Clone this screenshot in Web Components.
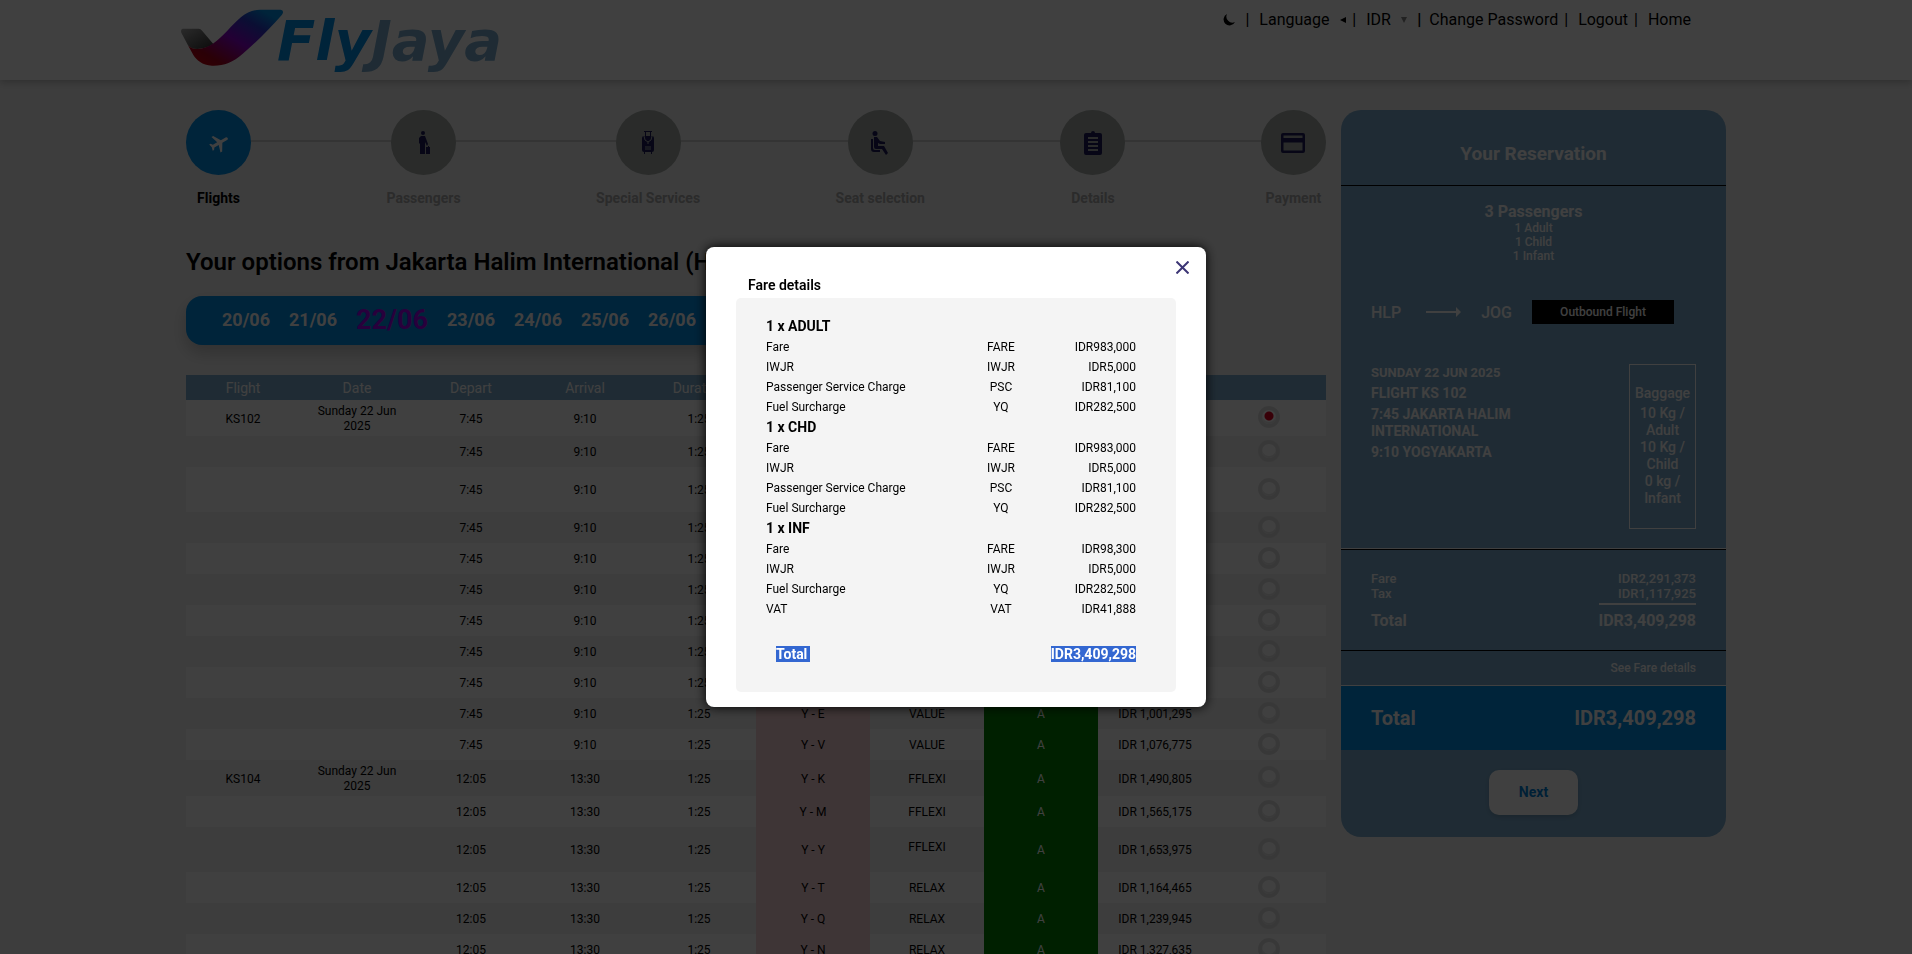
<!DOCTYPE html>
<html lang="en">
<head>
<meta charset="utf-8">
<title>FlyJaya</title>
<style>
    :root {
        --blue: #008ee6;
        --light-blue: #7cacce;
        --page: #f3f3f3;
    }

    body {
        margin: 0;
        height: 100vh;
        overflow: hidden;
        background: var(--page);
        color: #000;
        font: 14px/17px Roboto, "Liberation Sans", sans-serif;
    }
</style>
</head>
<body>
<site-header></site-header>
<booking-page>
    <booking-steps>
        <booking-step icon="plane" active>Flights</booking-step>
        <booking-step icon="person">Passengers</booking-step>
        <booking-step icon="luggage">Special Services</booking-step>
        <booking-step icon="seat">Seat selection</booking-step>
        <booking-step icon="clipboard">Details</booking-step>
        <booking-step icon="card">Payment</booking-step>
    </booking-steps>
    <flight-options>Your options from Jakarta Halim International (HLP) to Yogyakarta (JOG)</flight-options>
    <reservation-panel slot="aside"></reservation-panel>
</booking-page>
<fare-dialog>
    <span slot="title">Fare details</span>
    <fare-breakdown></fare-breakdown>
</fare-dialog>

<script>
/** Shared base: puts the element's style and markup in an open shadow root. */
class BaseElement extends HTMLElement {
    constructor() {
        super();
        const shadow = this.attachShadow({ mode: 'open' });
        const template = document.createElement('template');
        template.innerHTML = `<style>${this.css}</style>${this.html}`;
        shadow.appendChild(template.content.cloneNode(true));
    }

    get css() { return ''; }
    get html() { return '<slot></slot>'; }
}

class SiteHeader extends BaseElement {
    get css() {
        return /*css*/`
            :host {
                display: block;
                background: #fff;
                box-shadow: 0 2px 8px rgba(0, 0, 0, .25);
            }
            .inner {
                display: flex;
                justify-content: space-between;
                align-items: flex-start;
                box-sizing: border-box;
                height: 80px;
                max-width: 1550px;
                margin: 0 auto;
                padding: 0 40px 0 0;
            }
            .logo {
                display: flex;
                text-decoration: none;
            }
            .logo svg { display: block; }
            nav {
                display: flex;
                align-items: center;
                padding-top: 10px;
                font-size: 16px;
                line-height: 20px;
            }
            nav a, nav label { color: inherit; text-decoration: none; }
            nav label { display: flex; align-items: center; gap: 10px; }
            nav i { font-style: normal; margin: 0 10px 0 6px; }
            select, button {
                appearance: none;
                border: 0;
                margin: 0;
                padding: 0;
                background: none;
                color: inherit;
                font: inherit;
            }
            button { display: flex; margin-right: 3px; }
            b { font-weight: 900; margin: 0 8px 0 10px; }
            nav svg { display: block; }
        `;
    }

    get html() {
        return /*html*/`
            <div class="inner">
                <a class="logo" href="#" aria-label="FlyJaya">
                    <svg width="350" height="78" viewBox="0 0 350 78">
                        <defs>
                            <linearGradient id="ribbon" x1="0" y1="1" x2="1" y2="0">
                                <stop offset=".1" stop-color="#c00010"/>
                                <stop offset=".2" stop-color="#a8001c"/>
                                <stop offset=".48" stop-color="#8a00d0"/>
                                <stop offset=".72" stop-color="#2a3ccc"/>
                                <stop offset=".88" stop-color="#008ee6"/>
                            </linearGradient>
                            <linearGradient id="tail" x1="0" y1="0" x2="1" y2="1">
                                <stop offset="0" stop-color="#a8a8a8"/>
                                <stop offset="1" stop-color="#303030"/>
                            </linearGradient>
                        </defs>
                        <g transform="translate(-21 0) scale(.3333)">
                            <path fill="url(#tail)" d="M68 86H116Q122 86 127 93L160 132Q140 146 112 147Q92 147 84 136L64 98Q61 88 68 86Z"/>
                            <path fill="url(#ribbon)" d="M84 136Q92 147 112 147C150 145 174 120 202 92C236 57 258 30 300 29H362Q374 32 366 44C330 84 292 124 250 160C216 190 190 198 156 197C126 196 110 180 100 165Z"/>
                        </g>
                        <text x="96" y="60" font-family="DejaVu Sans" font-size="56" font-weight="700" font-style="italic" fill="#008ee6">Fly<tspan fill="#7cacce">Jaya</tspan></text>
                    </svg>
                </a>
                <nav>
                    <button type="button" aria-label="Dark mode">
                        <svg width="14" height="14" viewBox="0 0 14 14"><path d="M5 1A6 6 0 1 0 13 9A6 6 0 0 1 5 1Z"/></svg>
                    </button>
                    <i>|</i>
                    <label><select aria-label="Language"><option>Language</option></select>
                        <svg width="6" height="6" viewBox="0 0 6 6"><path d="M6 0V6L0 3Z"/></svg></label>
                    <i>|</i>
                    <label><select aria-label="Currency"><option>IDR</option></select>
                        <svg width="6" height="6" viewBox="0 0 6 6"><path fill="#888" d="M0 0H6L3 6Z"/></svg></label>
                    <b>|</b>
                    <a href="#">Change Password</a><i>|</i>
                    <a href="#">Logout</a><i>|</i>
                    <a href="#">Home</a>
                </nav>
            </div>
        `;
    }
}

/** Two columns: the booking content and the reservation on the right. */
class BookingPage extends BaseElement {
    get css() {
        return /*css*/`
            :host {
                display: grid;
                grid-template-columns: minmax(0, 1fr) 385px;
                gap: 15px;
                align-items: start;
                max-width: 1540px;
                margin: 30px auto 0;
            }
        `;
    }

    get html() {
        return `<main><slot></slot></main><slot name="aside"></slot>`;
    }
}

class BookingSteps extends BaseElement {
    get css() {
        return /*css*/`
            :host {
                display: flex;
                justify-content: space-between;
                background: linear-gradient(#d0d0d0, #d0d0d0) 0 30px / 100% 2px no-repeat;
            }
        `;
    }
}

const STEP_ICONS = {
    plane: '<path transform="rotate(-30 12 12)" d="M22 12c0-.8-.7-1.500-1.500-1.500H15L10.500 3H8.500l2.300 7.500H5.800L4.300 8.500H2.700L3.700 12l-1 3.500h1.600l1.500-2h5L8.500 21h2L15 13.500h5.500c.8 0 1.500-.7 1.500-1.500z"/>',
    person: '<circle cx="11" cy="2" r="2"/><path d="M9 5h4l3 8-1 2-2-4v12H8V13L7 12V7z"/><path d="M15 16h1v-1h1v1h1v7h-4v-7z"/>',
    luggage: '<path d="M8 0h8v1H8zM9 1h1v4H9zM14 1h1v4h-1zM8 5h8q2 0 2 2v12q0 2-2 2v2h-1v-2H9v2H8v-2q-2 0-2-2V7q0-2 2-2z"/><path fill="none" stroke="#a6aca8" d="M8 5q0 5 4 6q4-1 4-6M12 11v2M9 16h6M9 18h6"/>',
    seat: '<circle cx="7" cy="2.500" r="2.500"/><path d="M6 6h3l3 4 5 1v2h-5l-2-1v3h6l4 7-2 2-4-6H8q-2 0-2-2z"/><path d="M3 8v10q0 3 3 3h6v-2H7q-2 0-2-2V8z"/>',
    clipboard: '<path d="M5 2h5a2 2 0 0 1 4 0h5q2 0 2 2v18q0 2-2 2H5q-2 0-2-2V4q0-2 2-2z"/><path stroke="#a6aca8" stroke-width="2" d="M7 7h10M7 11h10M7 15h10M7 19h10"/>',
    card: '<path fill-rule="evenodd" d="M2 2h20q2 0 2 2v16q0 2-2 2H2q-2 0-2-2V4q0-2 2-2zM2.500 4.500v2.500h19V4.500zM2.500 11.500v8h19v-8z"/>'
};

class BookingStep extends BaseElement {
    connectedCallback() {
        this.shadowRoot.querySelector('svg').innerHTML = STEP_ICONS[this.getAttribute('icon')];
    }

    get css() {
        return /*css*/`
            :host {
                display: flex;
                flex-direction: column;
                align-items: center;
                gap: 14px;
                color: #aaa;
                font-weight: 700;
                line-height: 18px;
            }
            :host([active]) { color: #000; }
            .circle {
                display: grid;
                place-items: center;
                width: 65px;
                height: 65px;
                border-radius: 50%;
                background: #a6aca8;
                fill: #1c1a58;
            }
            :host([active]) .circle { background: var(--blue); fill: #fff; }
            svg { display: block; }
        `;
    }

    get html() {
        return `<div class="circle"><svg width="24" height="24" viewBox="0 0 24 24"></svg></div><span><slot></slot></span>`;
    }
}

class FlightOptions extends BaseElement {
    get css() {
        return /*css*/`
            :host { display: block; }
            h1 {
                margin: 40px 0 18px;
                font-size: 24px;
                line-height: 31px;
                font-weight: 600;
                white-space: nowrap;
            }
        `;
    }

    get html() {
        return `<h1><slot></slot></h1><date-strip></date-strip><flight-table></flight-table>`;
    }
}

class DateStrip extends BaseElement {
    get css() {
        return /*css*/`
            :host {
                display: flex;
                align-items: center;
                gap: 19px;
                box-sizing: border-box;
                width: fit-content;
                height: 49px;
                padding: 0 36px 2px;
                border-radius: 16px;
                background: var(--blue);
                box-shadow: 0 8px 16px rgba(0, 0, 0, .2);
            }
            a {
                color: #fff;
                font-size: 18px;
                line-height: 22px;
                font-weight: 700;
                text-decoration: none;
            }
            a.current { color: #a000f0; font-size: 27px; line-height: 32px; }
        `;
    }

    get html() {
        return ['20/06', '21/06', '22/06', '23/06', '24/06', '25/06', '26/06', '27/06', '28/06']
            .map(day => `<a href="#"${day === '22/06' ? ' class="current"' : ''}>${day}</a>`)
            .join('');
    }
}

const FLIGHTS = [
    {
        number: 'KS102', depart: '7:45', arrival: '9:10',
        fares: [
            ['K', 'FFLEXI', '1,490,805'], ['M', 'FFLEXI', '1,565,175'], ['Y', 'FFLEXI', '1,653,975'],
            ['T', 'RELAX', '1,164,465'], ['Q', 'RELAX', '1,239,945'], ['N', 'RELAX', '1,327,635'],
            ['L', 'VALUE', '776,000'], ['H', 'VALUE', '851,000'], ['B', 'VALUE', '926,000'],
            ['E', 'VALUE', '1,001,295'], ['V', 'VALUE', '1,076,775']
        ]
    },
    {
        number: 'KS104', depart: '12:05', arrival: '13:30',
        fares: [
            ['K', 'FFLEXI', '1,490,805'], ['M', 'FFLEXI', '1,565,175'], ['Y', 'FFLEXI', '1,653,975'],
            ['T', 'RELAX', '1,164,465'], ['Q', 'RELAX', '1,239,945'], ['N', 'RELAX', '1,327,635']
        ]
    }
];

class FlightTable extends BaseElement {
    get css() {
        return /*css*/`
            :host { display: block; margin-top: 30px; }
            table {
                width: 100%;
                table-layout: fixed;
                border-collapse: collapse;
                font-size: 12px;
                line-height: 15px;
                text-align: center;
            }
            th, td { box-sizing: border-box; padding: 2px 0 0; }
            th {
                height: 25px;
                background: var(--light-blue);
                color: #fff;
                font-size: 14px;
                font-weight: 400;
            }
            td { height: 31px; }
            .first td { height: 36px; }
            .tall td { height: 45px; }
            tbody tr { background: #fff; }
            tbody tr:nth-child(even) { background: #f1f1f1; }
            .date { padding: 2px 16px 0; }
            .class { background: #f8d2d5; }
            .seats { background: #008000; color: #fff; }
            .tall .fare { padding-bottom: 6px; }
            input {
                appearance: none;
                display: block;
                box-sizing: border-box;
                width: 22px;
                height: 22px;
                margin: 0 auto 4px;
                border: 4px solid #e0e0e0;
                border-radius: 50%;
                background: #fff;
                box-shadow: inset 0 -2px #e8e8e8;
            }
            input:checked { background: radial-gradient(circle at 7px 6px, #e00020 4px, #fff 5px); }
        `;
    }

    get html() {
        const rows = FLIGHTS.flatMap((flight, f) => flight.fares.map(([code, fare, price], i) => `
            <tr class="${i === 0 ? 'first' : i === 2 ? 'tall' : ''}">
                <td>${i ? '' : flight.number}</td>
                <td class="date">${i ? '' : 'Sunday 22 Jun 2025'}</td>
                <td>${flight.depart}</td>
                <td>${flight.arrival}</td>
                <td>1:25</td>
                <td class="class">Y - ${code}</td>
                <td class="fare">${fare}</td>
                <td class="seats">A</td>
                <td>IDR ${price}</td>
                <td><input type="radio" name="fare" aria-label="${flight.number} Y - ${code}"${f + i ? '' : ' checked'}></td>
            </tr>`)).join('');
        return /*html*/`
            <table>
                <thead>
                    <tr><th>Flight</th><th>Date</th><th>Depart</th><th>Arrival</th><th>Duration</th>
                    <th>Class</th><th>Fare</th><th>Seats</th><th>Price</th><th></th></tr>
                </thead>
                <tbody>${rows}</tbody>
            </table>
        `;
    }
}

class ReservationPanel extends BaseElement {
    get css() {
        return /*css*/`
            :host {
                display: block;
                overflow: hidden;
                border-radius: 20px;
                background: var(--light-blue);
                color: #fff;
                font-weight: 500;
            }
            h2, h3, p { margin: 0; }
            h2 {
                padding: 33px 0 20px;
                border-bottom: 1px solid #000;
                font-size: 19px;
                line-height: 22px;
                text-align: center;
            }
            .people {
                padding: 16px 0 37px;
                font-size: 12px;
                line-height: 14px;
                text-align: center;
            }
            h3 { font-size: 16px; line-height: 19px; }
            .route {
                display: flex;
                align-items: center;
                padding: 0 52px 0 30px;
                font-size: 16px;
            }
            .route svg { margin: 0 20px 0 25px; }
            .tag {
                flex: 1;
                margin-left: 20px;
                background: #000;
                font-size: 12px;
                line-height: 24px;
                text-align: center;
            }
            .trip {
                display: flex;
                justify-content: space-between;
                align-items: flex-start;
                padding: 40px 30px 19px;
                border-bottom: 1px solid #fff;
                font-weight: 700;
            }
            .trip div { width: 180px; }
            .trip p { margin-bottom: 4px; }
            .trip .day { font-size: 13px; }
            .trip .bags {
                box-sizing: border-box;
                width: 67px;
                padding: 20px 4px 21px;
                border: 1px solid #fff;
                font-weight: 500;
                text-align: center;
            }
            .bags p { margin-bottom: 3px; }
            .costs {
                display: grid;
                grid-template-columns: 1fr auto;
                padding: 21px 30px 20px;
                border-top: 1px solid #000;
                border-bottom: 1px solid #000;
                font-size: 13px;
                line-height: 15px;
            }
            .costs span:nth-child(even) { text-align: right; }
            .costs .sum {
                padding-top: 6px;
                margin-top: 2px;
                border-top: 2px solid transparent;
                font-size: 16px;
                line-height: 19px;
                font-weight: 700;
            }
            .costs .sum:last-child { border-color: #fff; }
            .more {
                display: block;
                padding: 9px 30px 8px;
                border-bottom: 1px solid #fff;
                color: inherit;
                font-size: 12px;
                text-align: right;
                text-decoration: none;
            }
            .grand {
                display: flex;
                justify-content: space-between;
                padding: 20px 30px;
                background: var(--blue);
                font-size: 20px;
                line-height: 24px;
                font-weight: 700;
            }
            button {
                display: block;
                width: 89px;
                height: 45px;
                margin: 20px auto 22px;
                border: 0;
                border-radius: 10px;
                background: #fff;
                color: #0080d8;
                box-shadow: 0 2px 5px rgba(0, 0, 0, .15);
                font: 700 14px/17px Roboto, sans-serif;
            }
        `;
    }

    get html() {
        return /*html*/`
            <h2>Your Reservation</h2>
            <div class="people">
                <h3>3 Passengers</h3>
                <p>1 Adult</p><p>1 Child</p><p>1 Infant</p>
            </div>
            <div class="route">
                <span>HLP</span>
                <svg width="35" height="10" viewBox="0 0 35 10"><path fill="#fff" d="M0 4H30V0L35 5L30 10V6H0Z"/></svg>
                <span>JOG</span>
                <span class="tag">Outbound Flight</span>
            </div>
            <div class="trip">
                <div>
                    <p class="day">SUNDAY 22 JUN 2025</p>
                    <p>FLIGHT KS 102</p>
                    <p>7:45 JAKARTA HALIM INTERNATIONAL</p>
                    <p>9:10 YOGYAKARTA</p>
                </div>
                <div class="bags"><p>Baggage</p>10 Kg / Adult<br>10 Kg / Child<br>0 kg / Infant</div>
            </div>
            <div class="costs">
                <span>Fare</span><span>IDR2,291,373</span>
                <span>Tax</span><span>IDR1,117,925</span>
                <span class="sum">Total</span><span class="sum">IDR3,409,298</span>
            </div>
            <a class="more" href="#">See Fare details</a>
            <div class="grand"><span>Total</span><span>IDR3,409,298</span></div>
            <button type="button">Next</button>
        `;
    }
}

/** Modal over a dark backdrop. */
class FareDialog extends BaseElement {
    get css() {
        return /*css*/`
            :host {
                position: fixed;
                inset: 0;
                display: grid;
                place-items: center;
                background: rgba(0, 0, 0, .75);
            }
            section {
                position: relative;
                box-sizing: border-box;
                width: 500px;
                max-width: 100%;
                padding: 30px 30px 15px;
                border-radius: 8px;
                background: #fff;
                box-shadow: 0 0 12px #000;
            }
            h2 {
                margin: 0 12px 4px;
                font-size: 14px;
                line-height: 17px;
                font-weight: 600;
            }
            button {
                position: absolute;
                top: 10px;
                right: 13px;
                padding: 4px;
                border: 0;
                background: none;
            }
            svg { display: block; }
        `;
    }

    get html() {
        return /*html*/`
            <section role="dialog" aria-modal="true" aria-labelledby="title">
                <button type="button" aria-label="Close">
                    <svg width="13" height="13" viewBox="0 0 13 13"><path stroke="#3c3575" stroke-width="2" d="M0.500 0.500L12.500 12.500M12.500 0.500L0.500 12.500"/></svg>
                </button>
                <h2 id="title"><slot name="title"></slot></h2>
                <slot></slot>
            </section>
        `;
    }
}

const FARE_GROUPS = [
    ['1 x ADULT', ['Fare', 'FARE', '983,000'], ['IWJR', 'IWJR', '5,000'], ['Passenger Service Charge', 'PSC', '81,100'], ['Fuel Surcharge', 'YQ', '282,500']],
    ['1 x CHD', ['Fare', 'FARE', '983,000'], ['IWJR', 'IWJR', '5,000'], ['Passenger Service Charge', 'PSC', '81,100'], ['Fuel Surcharge', 'YQ', '282,500']],
    ['1 x INF', ['Fare', 'FARE', '98,300'], ['IWJR', 'IWJR', '5,000'], ['Fuel Surcharge', 'YQ', '282,500'], ['VAT', 'VAT', '41,888']]
];

class FareBreakdown extends BaseElement {
    get css() {
        return /*css*/`
            :host {
                display: block;
                padding: 18px 40px 22px 30px;
                border-radius: 5px;
                background: #f4f4f4;
            }
            table {
                width: 100%;
                table-layout: fixed;
                border-collapse: collapse;
                font-size: 12px;
                line-height: 20px;
            }
            td, th { padding: 0; text-align: left; }
            tbody th { font-size: 14px; line-height: 21px; font-weight: 700; }
            td + td { text-align: center; }
            td + td + td { text-align: right; }
            .name { width: 50%; }
            .code { width: 27%; }
            .total {
                display: flex;
                justify-content: space-between;
                padding: 27px 0 8px 10px;
                font-weight: 700;
                line-height: 16px;
            }
            mark { background: #3367d1; color: #fff; }
            mark:first-child { padding-right: 3px; }
        `;
    }

    get html() {
        const rows = FARE_GROUPS.map(([title, ...lines]) => `
            <tr><th colspan="3">${title}</th></tr>
            ${lines.map(([name, code, sum]) => `<tr><td>${name}</td><td>${code}</td><td>IDR${sum}</td></tr>`).join('')}
        `).join('');
        return /*html*/`
            <table>
                <colgroup><col class="name"><col class="code"><col></colgroup>
                <tbody>${rows}</tbody>
            </table>
            <div class="total"><mark>Total</mark><mark>IDR3,409,298</mark></div>
        `;
    }
}

customElements.define('site-header', SiteHeader);
customElements.define('booking-page', BookingPage);
customElements.define('booking-steps', BookingSteps);
customElements.define('booking-step', BookingStep);
customElements.define('date-strip', DateStrip);
customElements.define('flight-table', FlightTable);
customElements.define('flight-options', FlightOptions);
customElements.define('reservation-panel', ReservationPanel);
customElements.define('fare-breakdown', FareBreakdown);
customElements.define('fare-dialog', FareDialog);
</script>
</body>
</html>
